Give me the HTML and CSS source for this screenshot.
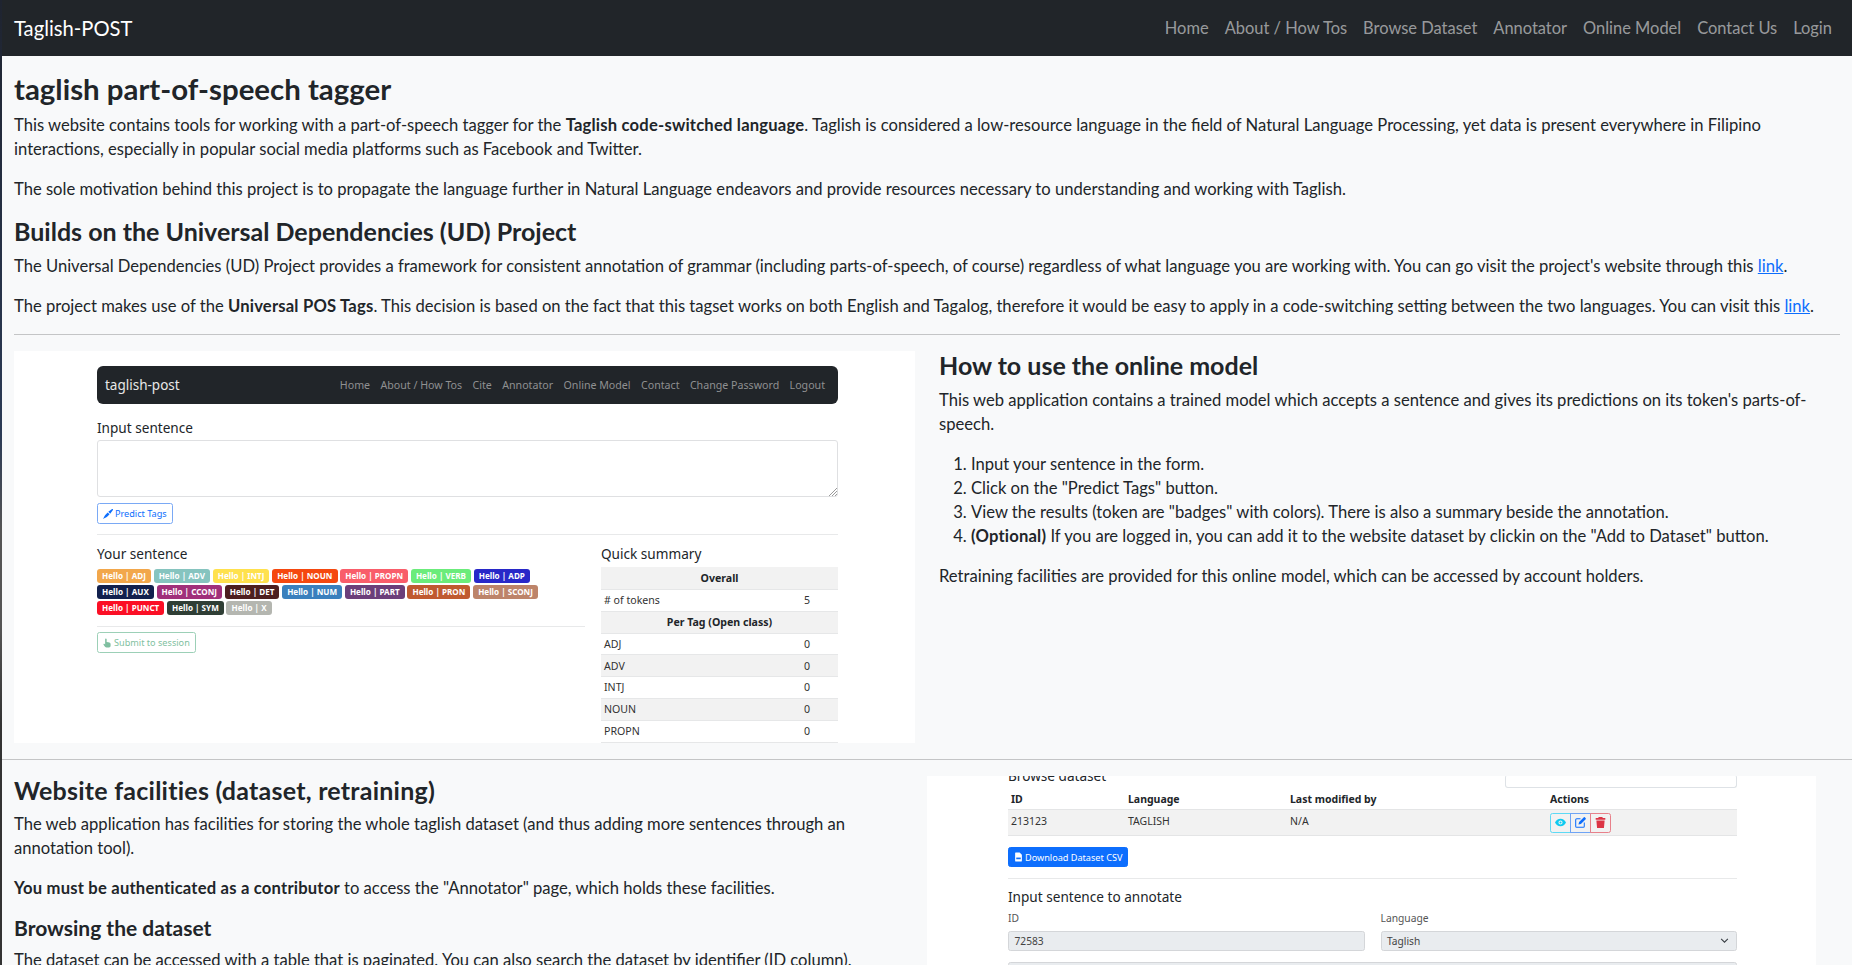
FILE: index.html
```html
<!DOCTYPE html>
<html lang="en">

<head>
    <meta charset="UTF-8">
    <meta name="viewport" content="width=device-width, initial-scale=1.0">
    <title>Taglish-POST</title>
    <link rel="stylesheet" href="styles.css">
</head>

<body>
    <nav class="navbar">
        <a class="brand" href="#">Taglish-POST</a>
        <div class="nav-links">
            <a href="#">Home</a>
            <a href="#">About / How Tos</a>
            <a href="#">Browse Dataset</a>
            <a href="#">Annotator</a>
            <a href="#">Online Model</a>
            <a href="#">Contact Us</a>
            <a href="#">Login</a>
        </div>
    </nav>

    <div class="container">
        <h3>taglish part-of-speech tagger</h3>
        <p>This website contains tools for working with a part-of-speech tagger for the <b>Taglish code-switched language</b>. Taglish is considered a low-resource language in the field of Natural Language Processing, yet data is present everywhere in Filipino interactions, especially in popular social media platforms such as Facebook and Twitter.</p>
        <p>The sole motivation behind this project is to propagate the language further in Natural Language endeavors and provide resources necessary to understanding and working with Taglish.</p>
        <h4>Builds on the Universal Dependencies (UD) Project</h4>
        <p>The Universal Dependencies (UD) Project provides a framework for consistent annotation of grammar (including parts-of-speech, of course) regardless of what language you are working with. You can go visit the project's website through this <a href="#">link</a>.</p>
        <p>The project makes use of the <b>Universal POS Tags</b>. This decision is based on the fact that this tagset works on both English and Tagalog, therefore it would be easy to apply in a code-switching setting between the two languages. You can visit this <a href="#">link</a>.</p>
        <hr>

        <div class="row">
            <div class="col">
                <div class="shot shot-model">
                    <div class="mini-nav">
                        <span class="mini-brand">taglish-post</span>
                        <div class="mini-links">
                            <span>Home</span>
                            <span>About / How Tos</span>
                            <span>Cite</span>
                            <span>Annotator</span>
                            <span>Online Model</span>
                            <span>Contact</span>
                            <span>Change Password</span>
                            <span>Logout</span>
                        </div>
                    </div>
                    <div class="mini-title first">Input sentence</div>
                    <div class="mini-textarea">
                        <svg class="resizer" viewBox="0 0 8 8" width="8" height="8">
                            <path d="M8 0L0 8M8 3L3 8M8 6L6 8" stroke="#9a9a9a" stroke-width="1" fill="none"></path>
                        </svg>
                    </div>
                    <div class="mini-btn btn-blue">
                        <svg viewBox="0 0 16 16" width="10" height="10">
                            <path fill="#0d6efd" d="M15.8.2c-.5-.4-1.200-.2-1.800.2L8.500 4.500l3 3 4.100-5.500c.4-.6.600-1.300.2-1.800zM7.500 5.500 4 9c-1.500 1.500-2 3-2.500 4.200L0 16l2.800-1.500C4 14 5.500 13.500 7 12l3.500-3.500z"></path>
                        </svg>
                        Predict Tags
                    </div>
                    <div class="mini-hr"></div>
                    <div class="mini-cols">
                        <div class="mini-left">
                            <div class="mini-title">Your sentence</div>
                            <div class="badges">
                                <div class="badge-row">
                                    <span class="badge adj">Hello | ADJ</span>
                                    <span class="badge adv">Hello | ADV</span>
                                    <span class="badge intj">Hello | INTJ</span>
                                    <span class="badge noun">Hello | NOUN</span>
                                    <span class="badge propn">Hello | PROPN</span>
                                    <span class="badge verb">Hello | VERB</span>
                                    <span class="badge adp">Hello | ADP</span>
                                </div>
                                <div class="badge-row">
                                    <span class="badge aux">Hello | AUX</span>
                                    <span class="badge cconj">Hello | CCONJ</span>
                                    <span class="badge det">Hello | DET</span>
                                    <span class="badge num">Hello | NUM</span>
                                    <span class="badge part">Hello | PART</span>
                                    <span class="badge pron">Hello | PRON</span>
                                    <span class="badge sconj">Hello | SCONJ</span>
                                </div>
                                <div class="badge-row">
                                    <span class="badge punct">Hello | PUNCT</span>
                                    <span class="badge sym">Hello | SYM</span>
                                    <span class="badge x">Hello | X</span>
                                </div>
                            </div>
                            <div class="mini-hr left-hr"></div>
                            <div class="mini-btn btn-green">
                                <svg viewBox="0 0 16 16" width="9" height="10">
                                    <path fill="#7fbfa0" d="M5 0c.8 0 1.500.7 1.500 1.500V6l3 .5c2 .4 4 1 4 3.500v3c0 1.500-1 3-3 3H6c-1.500 0-2.500-1-3.500-2.500L1 11c-.6-1.200.8-2.200 1.800-1.300l1 1V1.500C3.800.7 4.200 0 5 0z"></path>
                                </svg>
                                Submit to session
                            </div>
                        </div>
                        <div class="mini-right">
                            <div class="mini-title">Quick summary</div>
                            <table class="summary">
                                <tr class="shade"><th colspan="2">Overall</th></tr>
                                <tr><td># of tokens</td><td class="val">5</td></tr>
                                <tr class="shade"><th colspan="2">Per Tag (Open class)</th></tr>
                                <tr><td>ADJ</td><td class="val">0</td></tr>
                                <tr class="shade"><td>ADV</td><td class="val">0</td></tr>
                                <tr><td>INTJ</td><td class="val">0</td></tr>
                                <tr class="shade"><td>NOUN</td><td class="val">0</td></tr>
                                <tr><td>PROPN</td><td class="val">0</td></tr>
                            </table>
                        </div>
                    </div>
                </div>
            </div>
            <div class="col">
                <h4>How to use the online model</h4>
                <p>This web application contains a trained model which accepts a sentence and gives its predictions on its token's parts-of-speech.</p>
                <ol>
                    <li>Input your sentence in the form.</li>
                    <li>Click on the "Predict Tags" button.</li>
                    <li>View the results (token are "badges" with colors). There is also a summary beside the annotation.</li>
                    <li><b>(Optional)</b> If you are logged in, you can add it to the website dataset by clickin on the "Add to Dataset" button.</li>
                </ol>
                <p>Retraining facilities are provided for this online model, which can be accessed by account holders.</p>
            </div>
        </div>
    </div>

    <hr class="wide">

    <div class="row second">
        <div class="col">
            <h4>Website facilities (dataset, retraining)</h4>
            <p>The web application has facilities for storing the whole taglish dataset (and thus adding more sentences through an annotation tool).</p>
            <p><b>You must be authenticated as a contributor</b> to access the "Annotator" page, which holds these facilities.</p>
            <h5>Browsing the dataset</h5>
            <p>The dataset can be accessed with a table that is paginated. You can also search the dataset by identifier (ID column).</p>
        </div>
        <div class="col-shot">
            <div class="shot shot-data">
                <div class="browse-head">
                    <div class="mini-title">Browse dataset</div>
                    <div class="search-box"></div>
                </div>
                <div class="data-table">
                    <div class="data-row data-head">
                        <span>ID</span><span>Language</span><span>Last modified by</span><span>Actions</span>
                    </div>
                    <div class="data-row data-body">
                        <span>213123</span><span>TAGLISH</span><span>N/A</span>
                        <span class="actions">
                            <i class="act act-view">
                                <svg viewBox="0 0 16 16" width="11" height="11">
                                    <path fill="#0dcaf0" fill-rule="evenodd" d="M8 2.500C4.500 2.500 1.500 5 0 8c1.500 3 4.500 5.500 8 5.500s6.500-2.500 8-5.500c-1.500-3-4.500-5.500-8-5.500zM8 5a3 3 0 1 1 0 6 3 3 0 0 1 0-6z"></path>
                                    <circle cx="8" cy="8" r="1.500" fill="#0dcaf0"></circle>
                                </svg>
                            </i>
                            <i class="act act-edit">
                                <svg viewBox="0 0 16 16" width="11" height="11">
                                    <path fill="#0d6efd" d="M15.500 1.700 14.300.5a1 1 0 0 0-1.400 0L6 7.400 5 11l3.600-1 6.900-6.900a1 1 0 0 0 0-1.400z"></path>
                                    <path fill="none" stroke="#0d6efd" stroke-width="1.500" d="M8 2.500H2.500a1.500 1.500 0 0 0-1.500 1.500v9.500A1.500 1.500 0 0 0 2.500 15H12a1.500 1.500 0 0 0 1.500-1.500V8"></path>
                                </svg>
                            </i>
                            <i class="act act-del">
                                <svg viewBox="0 0 16 16" width="11" height="11">
                                    <path fill="#dc3545" d="M5.500 0h5l1 1.500H15v2.500H1V1.500h3.500zM2 5h12l-1 11H3z"></path>
                                </svg>
                            </i>
                        </span>
                    </div>
                </div>
                <div class="mini-btn btn-solid">
                    <svg viewBox="0 0 16 16" width="9" height="10">
                        <path fill="#fff" d="M3 0h7l4 4v10.500A1.500 1.500 0 0 1 12.500 16h-9A1.500 1.500 0 0 1 2 14.500V1.500A1.500 1.500 0 0 1 3 0z"></path>
                        <rect x="4" y="9" width="8" height="3" fill="#0d6efd"></rect>
                    </svg>
                    Download Dataset CSV
                </div>
                <div class="mini-hr data-hr"></div>
                <div class="mini-title annotate">Input sentence to annotate</div>
                <div class="form-row">
                    <div class="field">
                        <label>ID</label>
                        <div class="fake-input">72583</div>
                    </div>
                    <div class="field">
                        <label>Language</label>
                        <div class="fake-input fake-select">
                            Taglish
                            <svg viewBox="0 0 16 16" width="9" height="9">
                                <path d="M2 5l6 6 6-6" fill="none" stroke="#343a40" stroke-width="1.800"></path>
                            </svg>
                        </div>
                    </div>
                </div>
                <div class="fake-input fake-area"></div>
            </div>
        </div>
    </div>
</body>

</html>
```

FILE: styles.css
```css
* {
    box-sizing: border-box;
}

html, body {
    height: 965px;
    overflow: hidden;
}

body {
    margin: 0;
    padding-left: 2px;
    background: #f8f9fa;
    font-family: Lato, "Open Sans", sans-serif;
    font-size: 16.6px;
    line-height: 24px;
    color: #212529;
    position: relative;
}

/* the dark edge down the left of the window */
body::before {
    content: "";
    position: absolute;
    left: 0;
    top: 0;
    bottom: 0;
    width: 2px;
    background: linear-gradient(#1f2430 0, #2b3a55 45%, #555 55%, #555 65%, #333 75%);
}

b {
    letter-spacing: .2px;
}

.navbar {
    height: 56px;
    background: #212529;
    display: flex;
    justify-content: space-between;
    align-items: center;
    padding: 0 20px 0 12px;
}

.brand {
    font-size: 20.2px;
    color: #fff;
    text-decoration: none;
}

.nav-links {
    display: flex;
    gap: 16px;
    font-size: 16.45px;
}

.nav-links a {
    color: rgba(255, 255, 255, .55);
    text-decoration: none;
}

.container {
    padding: 16px 12px 0;
}

h3, h4, h5 {
    margin: 0 0 8px;
    font-weight: 700;
}

h3 {
    font-size: 29.4px;
    line-height: 33.6px;
    margin-bottom: 7.4px;
}

h4 {
    font-size: 25px;
    line-height: 28.8px;
}

h5 {
    font-size: 21px;
    line-height: 24px;
}

p {
    margin: 0 0 16px;
}

ol {
    margin: 0 0 16px;
    padding-left: 32px;
}

a {
    color: #0d6efd;
}

hr {
    margin: 0 0 16px;
    border: 0;
    border-top: 1px solid #c4c5c6;
}

hr.wide {
    margin: 16px 0;
}

.row {
    display: flex;
    margin: 0 -12px;
}

.col {
    width: 925px;
    padding: 0 12px;
    flex: none;
}

.second {
    margin: 0;
}

.second h4 {
    margin-bottom: 7px;
    letter-spacing: .24px;
}

.col-shot {
    width: 889px;
    flex: none;
}

/* screenshots inside the page */
.shot {
    background: #fff;
    overflow: hidden;
    font-family: "Noto Sans", sans-serif;
    line-height: 1.2;
}

.shot-model {
    height: 392px;
    padding: 15.6px 77px 0 83px;
}

.shot-data {
    height: 189px;
    padding: 0 79px 0 81px;
}

.mini-nav {
    height: 38px;
    background: #212529;
    border-radius: 6px;
    padding: 0 13px 0 8px;
    display: flex;
    justify-content: space-between;
    align-items: center;
}

.mini-brand {
    color: #e8e8e8;
    font-size: 13.5px;
}

.mini-links {
    display: flex;
    gap: 10.4px;
    color: #8f9091;
    font-size: 10.65px;
}

.mini-title {
    font-size: 13.6px;
    line-height: 16px;
    color: #212529;
}

.first {
    margin-top: 16px;
}

.mini-textarea {
    height: 57px;
    margin-top: 4px;
    border: 1px solid #dfe0e2;
    border-radius: 3px;
    position: relative;
}

.resizer {
    position: absolute;
    right: 0;
    bottom: 0;
}

.mini-btn {
    display: flex;
    width: fit-content;
    align-items: center;
    gap: 2px;
    height: 21px;
    padding: 0 5px;
    border-radius: 2.5px;
    font-size: 9.15px;
    border: 1px solid;
}

.btn-blue {
    margin-top: 6px;
    color: #0d6efd;
    border-color: #7aa9f5;
}

.btn-green {
    color: #7fbfa0;
    border-color: #9cd0b7;
}

.btn-solid {
    height: 20px;
    background: #0d6efd;
    border-color: #0d6efd;
    color: #fff;
    margin-top: 11px;
}

.mini-hr {
    height: 1px;
    background: #e8e9ea;
    margin-top: 10px;
}

.mini-cols {
    display: flex;
    gap: 16px;
    margin-top: 11px;
}

.mini-left {
    width: 488px;
    flex: none;
}

.mini-right {
    flex: 1;
}

.badges {
    display: flex;
    flex-direction: column;
    gap: 2.6px;
    margin-top: 7px;
}

.badge-row {
    display: flex;
    gap: 2.6px;
}

.badge {
    height: 13.4px;
    line-height: 13.4px;
    padding: 0 5.1px;
    border-radius: 3px;
    font-size: 8.1px;
    font-weight: 700;
    color: #fff;
}

.adj { background: #f2a74b; }
.adv { background: #86c4bf; }
.intj { background: #ffe14d; }
.noun { background: #f5480f; }
.propn { background: #f95d6a; }
.verb { background: #6bec7b; }
.adp { background: #2828c8; }
.aux { background: #12204d; }
.cconj { background: #a0307a; }
.det { background: #4d1f1f; }
.num { background: #3a80bd; }
.part { background: #6c3f7a; }
.pron { background: #c05a30; }
.sconj { background: #bd846a; }
.punct { background: #fb0f25; }
.sym { background: #2f3e35; }
.x { background: #b4b6b0; }

.left-hr {
    margin-top: 11px;
}

.left-hr + .mini-btn {
    margin-top: 5.5px;
}

.summary {
    width: 100%;
    margin-top: 5px;
    border-collapse: collapse;
    font-size: 10.6px;
    color: #333;
}

.summary th, .summary td {
    height: 21.9px;
    padding: 0 3px;
    border-bottom: 1px solid #e6e7e8;
}

.summary th {
    color: #212529;
    text-align: center;
}

.summary .val {
    width: 37px;
}

.shade {
    background: #f2f2f2;
}

.browse-head {
    display: flex;
    justify-content: space-between;
    height: 13px;
}

.browse-head .mini-title {
    margin-top: -8px;
}

.search-box {
    width: 232px;
    height: 13px;
    margin-top: -1px;
    border: 1px solid #dee2e6;
    border-top: 0;
    border-radius: 3px;
}

.data-table {
    font-size: 10.5px;
    color: #333;
}

.data-row {
    display: grid;
    grid-template-columns: 117px 162px 260px 1fr;
    padding-left: 3px;
    align-items: center;
}

.data-head {
    height: 21px;
    padding-top: 1px;
    font-weight: 700;
    color: #212529;
    border-bottom: 1px solid #e4e5e6;
}

.data-body {
    height: 26.5px;
    background: #f2f2f2;
    border-bottom: 1px solid #e4e5e6;
}

.data-body > span {
    margin-top: -2px;
}

.data-body > .actions {
    display: flex;
    margin-top: 0;
}

.act {
    width: 21px;
    height: 20px;
    border: 1px solid;
    display: flex;
    align-items: center;
    justify-content: center;
}

.act-view {
    border-color: #5dd9f5;
    border-radius: 2.5px 0 0 2.5px;
}

.act-edit {
    border-color: #6ea4f5;
    margin-left: -1px;
}

.act-del {
    border-color: #e8808a;
    border-radius: 0 2.5px 2.5px 0;
    margin-left: -1px;
}

.data-hr {
    margin-top: 11px;
}

.annotate {
    margin-top: 10px;
}

.form-row {
    display: flex;
    gap: 16px;
    margin-top: 6.2px;
}

.field {
    flex: 1;
}

.field label {
    display: block;
    font-size: 10.3px;
    line-height: 14px;
    color: #555;
    margin-bottom: 5.6px;
}

.fake-input {
    height: 19.7px;
    padding: 0 5.5px;
    display: flex;
    align-items: center;
    justify-content: space-between;
    background: #e9ecef;
    border: 1px solid #d4d6d9;
    border-radius: 2.5px;
    font-size: 10.2px;
    color: #444;
}

.fake-select svg {
    margin-right: 2px;
}

.fake-area {
    height: 30px;
    margin-top: 10.8px;
}
```
